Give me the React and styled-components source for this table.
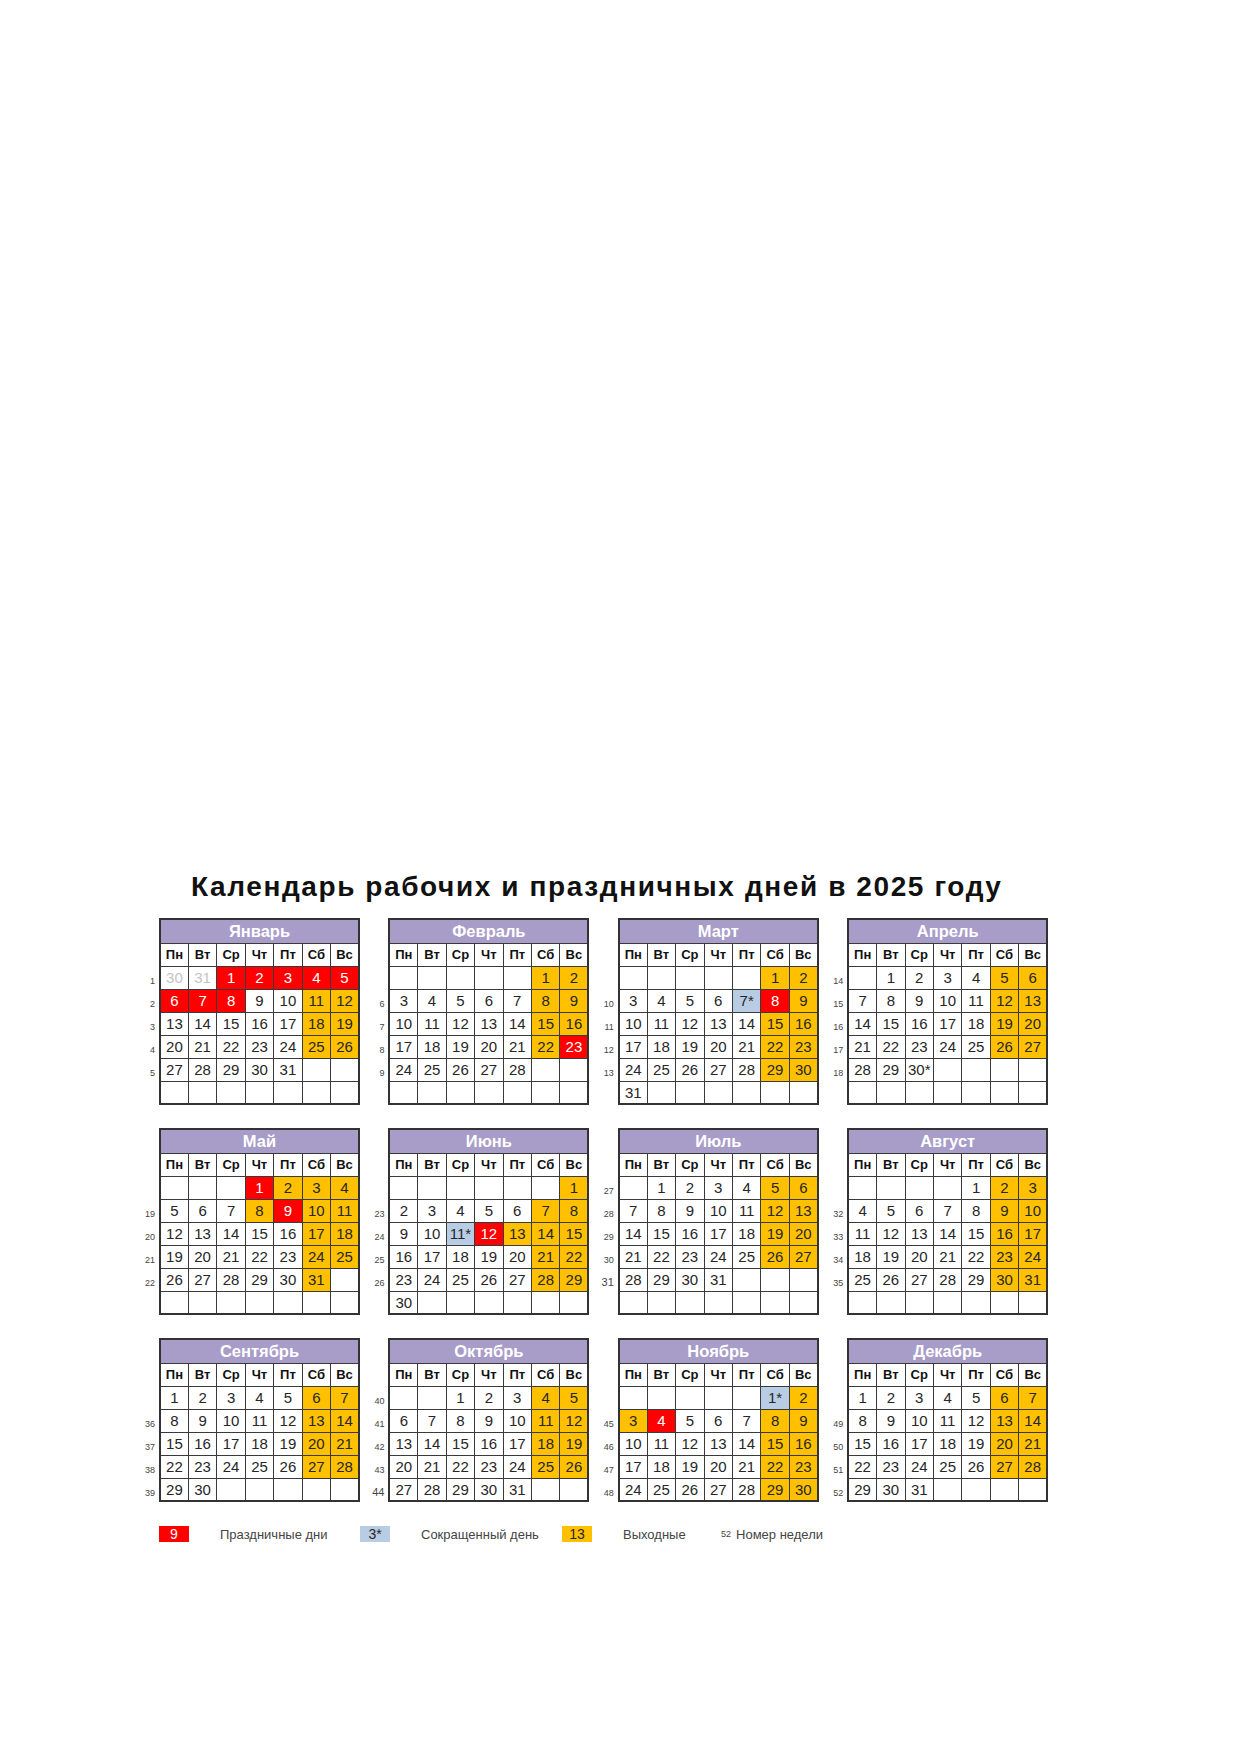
import React from "react";
import styled, { createGlobalStyle, css } from "styled-components";

// =============================================================================
// Global
// =============================================================================

const GlobalStyle = createGlobalStyle`
  html, body {
    margin: 0;
    padding: 0;
    background: #ffffff;
  }
  body {
    font-family: "Liberation Sans", Arial, "Noto Sans", sans-serif;
    color: #222;
  }
`;

// =============================================================================
// Data
// =============================================================================

const DAY_NAMES = ["Пн", "Вт", "Ср", "Чт", "Пт", "Сб", "Вс"];

const MONTHS = [
  { name: "Январь", start: 2, days: 31, lead: ["30", "31"], holidays: [1, 2, 3, 4, 5, 6, 7, 8], weeks: [1, 2, 3, 4, 5, null] },
  { name: "Февраль", start: 5, days: 28, holidays: [23], weeks: [null, 6, 7, 8, 9, null] },
  { name: "Март", start: 5, days: 31, holidays: [8], short: [7], weeks: [null, 10, 11, 12, 13, null] },
  { name: "Апрель", start: 1, days: 30, star: [30], weeks: [14, 15, 16, 17, 18, null] },
  { name: "Май", start: 3, days: 31, holidays: [1, 9], off: [2, 8], weeks: [null, 19, 20, 21, 22, null] },
  { name: "Июнь", start: 6, days: 30, holidays: [12], short: [11], off: [13], weeks: [null, 23, 24, 25, 26, null] },
  { name: "Июль", start: 1, days: 31, weeks: [27, 28, 29, 30, 31, null], bigWeeks: [31] },
  { name: "Август", start: 4, days: 31, weeks: [null, 32, 33, 34, 35, null] },
  { name: "Сентябрь", start: 0, days: 30, weeks: [null, 36, 37, 38, 39] },
  { name: "Октябрь", start: 2, days: 31, weeks: [40, 41, 42, 43, 44], bigWeeks: [44] },
  { name: "Ноябрь", start: 5, days: 30, holidays: [4], short: [1], off: [3], weeks: [null, 45, 46, 47, 48] },
  { name: "Декабрь", start: 0, days: 31, weeks: [null, 49, 50, 51, 52] },
];

// builds rows of { label, kind } cells for one month
function buildRows(m) {
  const cells = [];
  const lead = m.lead || [];
  for (let i = 0; i < m.start; i++) {
    const label = lead[i - (m.start - lead.length)];
    cells.push(label ? { label, kind: "other" } : null);
  }
  for (let d = 1; d <= m.days; d++) {
    const col = cells.length % 7;
    let kind = "plain";
    let label = String(d);
    if ((m.holidays || []).includes(d)) kind = "holiday";
    else if ((m.short || []).includes(d)) {
      kind = "short";
      label += "*";
    } else if ((m.off || []).includes(d) || col >= 5) kind = "weekend";
    if ((m.star || []).includes(d)) label += "*";
    cells.push({ label, kind });
  }
  const total = m.weeks.length * 7;
  while (cells.length < total) cells.push(null);
  const rows = [];
  for (let r = 0; r < m.weeks.length; r++) rows.push(cells.slice(r * 7, r * 7 + 7));
  return rows;
}

// =============================================================================
// Styled Components
// =============================================================================

const Page = styled.div`
  width: 1240px;
  min-height: 1754px;
  box-sizing: border-box;
  padding: 870px 0 0 131px;
`;

const Title = styled.h1`
  margin: 0 0 14px 60px;
  font-size: 28px;
  line-height: 34px;
  letter-spacing: 1.6px;
  font-weight: 700;
  color: #111;
  white-space: nowrap;
`;

const MonthGrid = styled.div`
  display: grid;
  grid-template-columns: repeat(4, 229.4px);
  row-gap: 23px;
  align-items: start;
`;

const MonthTable = styled.table`
  width: 229px;
  border-collapse: collapse;
  table-layout: fixed;

  col.week {
    width: 29px;
  }

  tbody tr:last-child td:not(:first-child) {
    border-bottom: 2px solid #333;
  }
`;

const HeaderRow = styled.tr`
  height: 24px;
`;

const Row = styled.tr`
  height: 23px;
`;

const WeekCell = styled.td`
  padding: 0 4px 3px 0;
  border: none;
  text-align: right;
  vertical-align: bottom;
  font-size: ${({ $large }) => ($large ? "11px" : "9px")};
  line-height: 1;
  color: #444;
`;

const edgeBorders = css`
  border: 1px solid #3a3a3a;
  &:nth-child(2) {
    border-left: 2px solid #333;
  }
  &:last-child {
    border-right: 2px solid #333;
  }
`;

const MonthHeader = styled.th`
  padding: 0;
  background: #a89cc9;
  color: #ffffff;
  font-size: 16.5px;
  font-weight: 700;
  text-align: center;
  border: 2px solid #333;
  border-bottom: 1px solid #3a3a3a;
`;

const DayName = styled.th`
  ${edgeBorders};
  padding: 0;
  background: #ffffff;
  color: #111;
  font-size: 13px;
  font-weight: 700;
  text-align: center;
`;

const kindStyles = {
  plain: css`
    background: #ffffff;
    color: #262626;
  `,
  other: css`
    background: #ffffff;
    color: #c4c4c4;
  `,
  holiday: css`
    background: #ff0000;
    color: #ffffff;
  `,
  weekend: css`
    background: #ffc000;
    color: #262626;
  `,
  short: css`
    background: #b8cce4;
    color: #262626;
  `,
};

const DayCell = styled.td`
  ${edgeBorders};
  padding: 0;
  font-size: 15px;
  text-align: center;
  ${({ $kind }) => kindStyles[$kind] || kindStyles.plain};
`;

const Legend = styled.div`
  display: flex;
  align-items: center;
  margin: 24px 0 0 28px;
  height: 16px;
`;

const Swatch = styled.div`
  width: 30px;
  height: 16px;
  margin-right: 31px;
  display: flex;
  align-items: center;
  justify-content: center;
  font-size: 14px;
  ${({ $kind }) => kindStyles[$kind]};
`;

const LegendLabel = styled.span`
  width: ${({ $width }) => $width}px;
  font-size: 13px;
  color: #444;
  white-space: nowrap;
`;

const WeekSample = styled.span`
  font-size: 9px;
  color: #444;
  margin-right: 5px;
`;

// =============================================================================
// Components
// =============================================================================

function Month({ month }) {
  const rows = buildRows(month);
  return (
    <MonthTable>
      <colgroup>
        <col className="week" />
        {DAY_NAMES.map((d) => (
          <col key={d} />
        ))}
      </colgroup>
      <thead>
        <HeaderRow>
          <WeekCell />
          <MonthHeader colSpan={7}>{month.name}</MonthHeader>
        </HeaderRow>
        <Row>
          <WeekCell />
          {DAY_NAMES.map((d) => (
            <DayName key={d}>{d}</DayName>
          ))}
        </Row>
      </thead>
      <tbody>
        {rows.map((row, r) => {
          const week = month.weeks[r];
          return (
            <Row key={r}>
              <WeekCell $large={(month.bigWeeks || []).includes(week)}>{week ?? ""}</WeekCell>
              {row.map((cell, c) =>
                cell ? (
                  <DayCell key={c} $kind={cell.kind}>
                    {cell.label}
                  </DayCell>
                ) : (
                  <DayCell key={c} $kind="plain" />
                )
              )}
            </Row>
          );
        })}
      </tbody>
    </MonthTable>
  );
}

export default function App() {
  return (
    <>
      <GlobalStyle />
      <Page>
        <Title>Календарь рабочих и праздничных дней в 2025 году</Title>
        <MonthGrid>
          {MONTHS.map((m) => (
            <Month key={m.name} month={m} />
          ))}
        </MonthGrid>
        <Legend>
          <Swatch $kind="holiday">9</Swatch>
          <LegendLabel $width={140}>Праздничные дни</LegendLabel>
          <Swatch $kind="short">3*</Swatch>
          <LegendLabel $width={141}>Сокращенный день</LegendLabel>
          <Swatch $kind="weekend">13</Swatch>
          <LegendLabel $width={98}>Выходные</LegendLabel>
          <WeekSample>52</WeekSample>
          <LegendLabel $width={100}>Номер недели</LegendLabel>
        </Legend>
      </Page>
    </>
  );
}
